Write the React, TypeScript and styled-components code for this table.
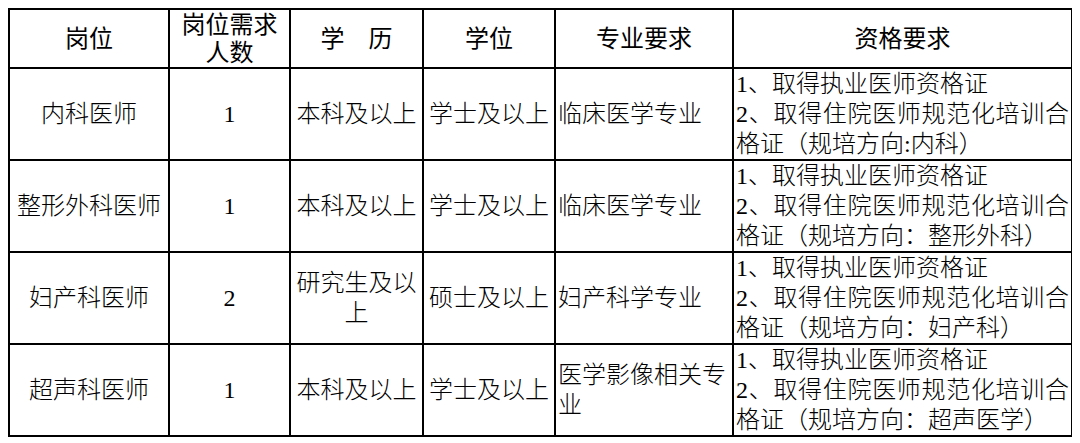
import styled, { createGlobalStyle } from "styled-components";

const GlobalStyle = createGlobalStyle`
    body {
        margin: 8px;
        background: #fff;
        font-family: "Liberation Serif", "Noto Sans CJK SC", serif;
        color: #000;
    }
`;

type Post = {
    name: string;
    count: number;
    education: string;
    degree: string;
    major: string;
    cert: string[];
};

const POSTS: Post[] = [
    {
        name: "内科医师",
        count: 1,
        education: "本科及以上",
        degree: "学士及以上",
        major: "临床医学专业",
        cert: ["1、取得执业医师资格证", "2、取得住院医师规范化培训合格证（规培方向:内科）"],
    },
    {
        name: "整形外科医师",
        count: 1,
        education: "本科及以上",
        degree: "学士及以上",
        major: "临床医学专业",
        cert: ["1、取得执业医师资格证", "2、取得住院医师规范化培训合格证（规培方向：整形外科）"],
    },
    {
        name: "妇产科医师",
        count: 2,
        education: "研究生及以上",
        degree: "硕士及以上",
        major: "妇产科学专业",
        cert: ["1、取得执业医师资格证", "2、取得住院医师规范化培训合格证（规培方向：妇产科）"],
    },
    {
        name: "超声科医师",
        count: 1,
        education: "本科及以上",
        degree: "学士及以上",
        major: "医学影像相关专业",
        cert: ["1、取得执业医师资格证", "2、取得住院医师规范化培训合格证（规培方向：超声医学）"],
    },
];

const COL_WIDTHS = [160, 121, 133, 132, 178, 339];

export default function App() {
    return (
        <>
            <GlobalStyle />
            <Table>
                <colgroup>
                    {COL_WIDTHS.map((w, i) => (
                        <col key={i} style={{ width: w }} />
                    ))}
                </colgroup>
                <thead>
                    <tr>
                        <HeadCell>岗位</HeadCell>
                        <HeadCell>岗位需求人数</HeadCell>
                        <HeadCell>学　历</HeadCell>
                        <HeadCell>学位</HeadCell>
                        <HeadCell>专业要求</HeadCell>
                        <HeadCell>资格要求</HeadCell>
                    </tr>
                </thead>
                <tbody>
                    {POSTS.map((p) => (
                        <tr key={p.name}>
                            <Cell>{p.name}</Cell>
                            <Cell>{p.count}</Cell>
                            <Cell>{p.education}</Cell>
                            <Cell>{p.degree}</Cell>
                            <Cell $align="left">{p.major}</Cell>
                            <Cell $align="left">
                                {p.cert.map((line) => (
                                    <CertLine key={line}>{line}</CertLine>
                                ))}
                            </Cell>
                        </tr>
                    ))}
                </tbody>
            </Table>
        </>
    );
}

const Table = styled.table`
    width: 1063px;
    table-layout: fixed;
    border-collapse: collapse;
    border: 2px solid #000;
    font-size: 24px;
`;

const HeadCell = styled.th`
    height: 57px;
    padding: 0 2px;
    border: 2px solid #000;
    font-weight: 400;
    line-height: 28px;
    text-align: center;
    vertical-align: middle;
`;

const Cell = styled.td<{ $align?: "left" | "center" }>`
    height: 86px;
    padding: 0 2px;
    border: 2px solid #000;
    font-weight: 300;
    line-height: 30px;
    text-align: ${(p) => p.$align || "center"};
    vertical-align: middle;
    word-break: break-all;
`;

const CertLine = styled.div`
    text-align: justify;
    text-align-last: left;
`;
